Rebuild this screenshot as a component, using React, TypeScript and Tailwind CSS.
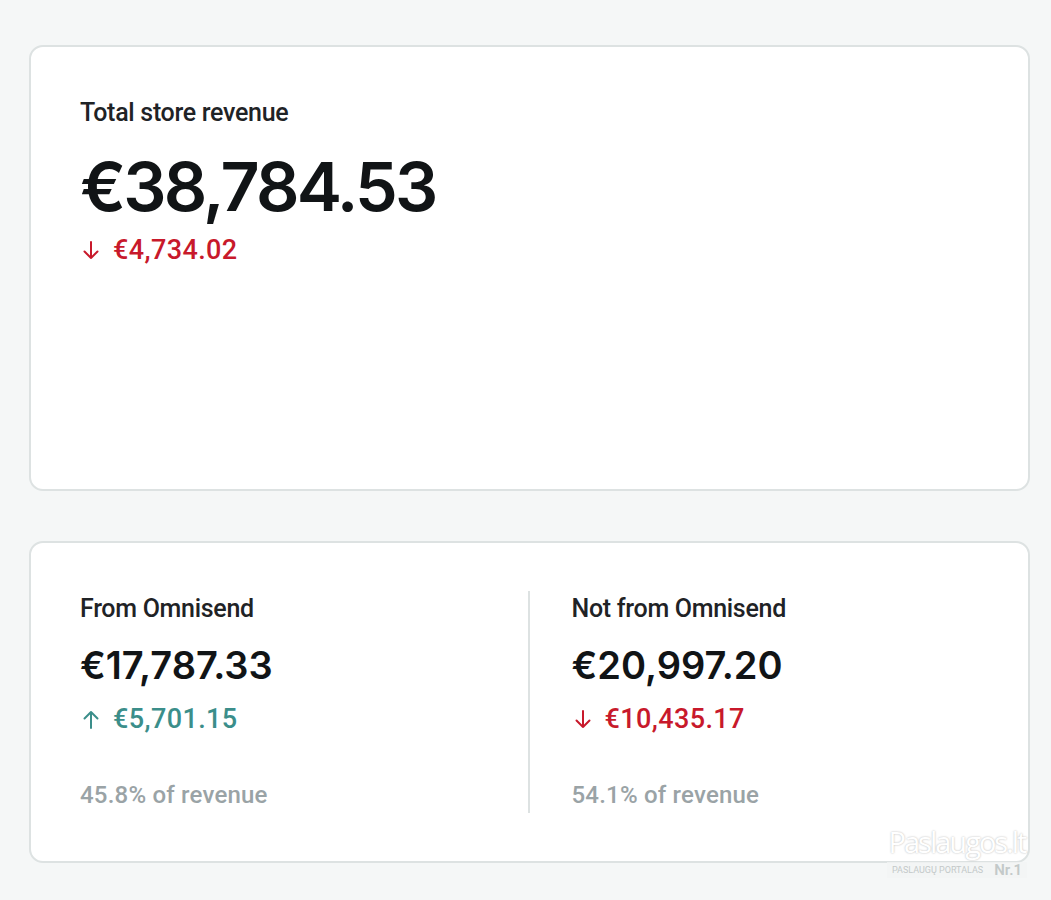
import { ReactNode } from 'react';

function Delta({ dir, value }: { dir: 'up' | 'down'; value: string }) {
  const up = dir === 'up';
  return (
    <div className={`flex items-center gap-[13px] text-[27px] leading-none font-medium tracking-[0.4px] ${up ? 'text-[#3b8e8a]' : 'text-[#c8192b]'}`}>
      <svg width="18" height="19" viewBox="0 0 18 19" fill="none" stroke="currentColor" strokeWidth="2" strokeLinecap="round" strokeLinejoin="round" className={`ml-[2px] ${up ? '' : 'rotate-180'}`}>
        <path d="M9 18V2M2.5 8.5L9 2l6.5 6.5" />
      </svg>
      <span>{value}</span>
    </div>
  );
}

function Card({ children, className = '' }: { children: ReactNode; className?: string }) {
  return <div className={`bg-white border-2 border-[#dde2e2] rounded-[14px] ${className}`}>{children}</div>;
}

function Metric({ label, value, delta, dir, share }: { label: string; value: string; delta: string; dir: 'up' | 'down'; share: string }) {
  return (
    <div className="flex flex-col h-full">
      <p className="text-[25px] leading-none font-medium tracking-[-0.3px] text-[#1f2326]">{label}</p>
      <p className="mt-[25px] text-[38px] leading-none font-semibold tracking-[0px] text-[#111416]" style={{ fontFamily: 'Inter, sans-serif' }}>{value}</p>
      <div className="mt-[22px]"><Delta dir={dir} value={delta} /></div>
      <p className="mt-auto text-[24px] leading-none text-[#9aa3a6] font-medium tracking-[0.2px]">{share}</p>
    </div>
  );
}

export default function App() {
  return (
    <div className="min-h-[900px] bg-[#f5f7f7] pl-[29px] pr-[21px] pt-[45px] relative" style={{ fontFamily: 'Roboto, "Liberation Sans", sans-serif' }}>
      <Card className="h-[446px] px-[49px] pt-[53px]">
        <p className="text-[25px] leading-none font-medium tracking-[-0.3px] text-[#1f2326]">Total store revenue</p>
        <p className="mt-[27px] text-[68px] leading-none font-semibold tracking-[-2.8px] text-[#111416]" style={{ fontFamily: 'Inter, sans-serif' }}>€38,784.53</p>
        <div className="mt-[17px]"><Delta dir="down" value="€4,734.02" /></div>
      </Card>

      <Card className="mt-[50px] h-[322px] px-[49px] py-[48px]">
        <div className="grid grid-cols-2 h-full">
          <div className="border-r-2 border-[#dde2e2] pt-[5px] pb-[6px]">
            <Metric label="From Omnisend" value="€17,787.33" delta="€5,701.15" dir="up" share="45.8% of revenue" />
          </div>
          <div className="pl-[42px] pt-[5px] pb-[6px]">
            <Metric label="Not from Omnisend" value="€20,997.20" delta="€10,435.17" dir="down" share="54.1% of revenue" />
          </div>
        </div>
      </Card>

      {/* portal badge in the corner */}
      <div className="absolute left-[887px] top-[825px] w-[140px] flex flex-col items-stretch pointer-events-none">
        <span className="text-center text-[29px] leading-[33px] tracking-[-2px] text-white" style={{ fontFamily: '"Open Sans", sans-serif', textShadow: '0 0 2px rgba(0,0,0,0.3)' }}>Paslaugos.lt</span>
        <div className="mt-[4px] h-[16px] flex items-center justify-between bg-[#f2f4f4]/80 px-[5px] text-[#c3c9c9]">
          <span className="text-[9px] leading-none">PASLAUGŲ PORTALAS</span>
          <span className="text-[15px] leading-none font-semibold">Nr.1</span>
        </div>
      </div>
    </div>
  );
}
